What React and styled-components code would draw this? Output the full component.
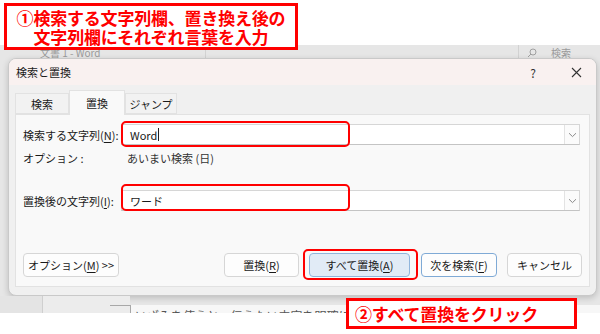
import React from "react";
import styled, { createGlobalStyle } from "styled-components";

const GlobalStyle = createGlobalStyle`
  html, body { margin: 0; padding: 0; background: #ffffff; }
  body { font-family: "Noto Sans CJK JP", "Noto Sans", sans-serif; }
  * { box-sizing: border-box; }
`;

const FONT = `"Noto Sans CJK JP", "Noto Sans", sans-serif`;

const Page = styled.div`
  position: relative;
  width: 600px;
  height: 334px;
  overflow: hidden;
  padding-top: 45px;
  background: #ffffff;
  font-family: ${FONT};
`;

const Backdrop = styled.div`
  height: 268px;
  background: #e6e6e6;
  display: flex;
  flex-direction: column;
  overflow: hidden;
`;

const WordBar = styled.div`
  height: 13px;
  display: flex;
  align-items: flex-end;
  font-size: 10px;
  line-height: 10px;
  color: #9a9a9a;
`;

const WordTitle = styled.span`
  margin-left: 40px;
  width: 165px;
`;

const BarDivider = styled.span`
  width: 1px;
  height: 13px;
  background: #d2d2d2;
  margin-left: ${p => p.$ml || 0}px;
`;

const BarSearch = styled.span`
  margin-left: 8px;
  display: flex;
  align-items: flex-end;
  gap: 14px;
`;

const DialogWrap = styled.div`
  padding: 0 3px 0 8px;
`;

const Dialog = styled.div`
  height: 238px;
  border: 1px solid #c9c9c9;
  border-radius: 8px;
  overflow: hidden;
  display: flex;
  flex-direction: column;
  background: #f0f0f0;
  box-shadow: 0 2px 6px rgba(0, 0, 0, 0.18);
`;

const TitleBar = styled.div`
  height: 26px;
  flex: none;
  background: #f9f1f0;
  display: flex;
  align-items: center;
  padding: 0 0 0 7px;
  font-size: 11px;
  color: #1a1a1a;
`;

const TitleText = styled.span`
  flex: 1;
`;

const TitleBtn = styled.span`
  width: ${p => p.$w}px;
  display: flex;
  justify-content: center;
  align-items: center;
  font-size: 12px;
  color: #333;
`;

const Body = styled.div`
  flex: 1;
  display: flex;
  flex-direction: column;
  padding: 5px 6px 8px 6px;
`;

const TabStrip = styled.div`
  height: 24px;
  flex: none;
  display: flex;
  align-items: flex-end;
  position: relative;
  z-index: 1;
`;

const Tab = styled.div`
  width: ${p => p.$w}px;
  height: ${p => (p.$active ? 25 : 21)}px;
  margin-bottom: ${p => (p.$active ? -1 : 0)}px;
  display: flex;
  align-items: center;
  justify-content: center;
  font-size: 11px;
  color: #1a1a1a;
  background: ${p => (p.$active ? "#f9f9f9" : "#f2f2f2")};
  border: 1px solid #e2e2e2;
  border-bottom: ${p => (p.$active ? "none" : "1px solid #e2e2e2")};
  padding-top: ${p => (p.$active ? 0 : 1)}px;
`;

const Panel = styled.div`
  flex: 1;
  background: #f9f9f9;
  border: 1px solid #e2e2e2;
  display: flex;
  flex-direction: column;
  padding: 9px 9px 9px 7px;
`;

const FieldRow = styled.div`
  display: flex;
  align-items: center;
  height: 21px;
  margin-top: ${p => p.$mt || 0}px;
`;

const Label = styled.div`
  width: 98px;
  flex: none;
  font-size: 11px;
  color: #1a1a1a;
  white-space: nowrap;
`;

const Key = styled.span`
  text-decoration: underline;
  text-underline-offset: 2px;
`;

const Combo = styled.div`
  flex: 1;
  height: 21px;
  background: #ffffff;
  border: 1px solid #d6d6d6;
  border-bottom-color: #c4c4c4;
  display: flex;
  align-items: center;
`;

const ComboText = styled.div`
  flex: 1;
  padding-left: 8px;
  font-size: 11px;
  color: #1a1a1a;
  display: flex;
  align-items: center;
`;

const Caret = styled.span`
  display: inline-block;
  width: 1px;
  height: 13px;
  background: #222;
  margin-left: 1px;
`;

const DropBtn = styled.div`
  width: 15px;
  height: 19px;
  border-left: 1px solid #e3e3e3;
  background: #fbfbfb;
  display: flex;
  align-items: center;
  justify-content: center;
`;

const OptionRow = styled.div`
  display: flex;
  align-items: center;
  height: 14px;
  margin-top: 6px;
  font-size: 11px;
  color: #333;
`;

const OptionValue = styled.span`
  margin-left: 6px;
`;

const Spacer = styled.div`
  flex: 1;
`;

const ButtonRow = styled.div`
  display: flex;
  align-items: center;
  height: 24px;
  margin-right: -2px;
`;

const Button = styled.div`
  width: ${p => p.$w}px;
  height: 24px;
  margin-left: ${p => p.$ml || 0}px;
  display: flex;
  align-items: center;
  justify-content: center;
  font-size: 11px;
  color: #1a1a1a;
  border-radius: 4px;
  background: ${p => (p.$primary ? "#e1ebf6" : "#fdfdfd")};
  border: 1px solid ${p => (p.$primary ? "#90b5dc" : p.$focus ? "#7faad6" : "#d6d6d6")};
  white-space: nowrap;
`;

const DocArea = styled.div`
  flex: 1;
  display: flex;
`;

const DocGutter = styled.div`
  width: 43px;
  border-right: 1px solid #cfcfcf;
  background: #e4e4e4;
`;

const DocMargin = styled.div`
  width: 87px;
  background: #ececec;
  display: flex;
  justify-content: flex-end;
`;

const Crop = styled.div`
  width: 20px;
  height: 9px;
  margin-top: 9px;
  border-top: 1px solid #a8a8a8;
`;

const DocPage = styled.div`
  flex: 1;
  background: #f7f7f7;
  margin-top: 9px;
  display: flex;
`;

const DocText = styled.div`
  width: 216px;
  border-left: 1px solid #a8a8a8;
  font-size: 12px;
  line-height: 12px;
  color: #555;
  padding: 5px 0 0 4px;
  white-space: nowrap;
  overflow: hidden;
`;

const Callout = styled.div`
  position: absolute;
  left: ${p => p.$x}px;
  top: ${p => p.$y}px;
  width: ${p => p.$w}px;
  height: ${p => p.$h}px;
  border: 3px solid #ff0000;
  background: #ffffff;
  color: #ff0000;
  font-weight: 700;
  font-size: 17px;
  line-height: 19px;
  display: flex;
  flex-direction: column;
  align-items: ${p => (p.$left ? "flex-start" : "center")};
  justify-content: center;
  padding-left: ${p => (p.$left ? 6 : 0)}px;
  white-space: nowrap;
  letter-spacing: -0.2px;
`;

const CalloutLine = styled.span`
  display: block;
  height: 19px;
`;

const Highlight = styled.div`
  position: absolute;
  left: ${p => p.$x}px;
  top: ${p => p.$y}px;
  width: ${p => p.$w}px;
  height: ${p => p.$h}px;
  border: 2.5px solid #ff0000;
  border-radius: 5px;
  pointer-events: none;
`;

const Chevron = () => (
  <svg width="9" height="6" viewBox="0 0 9 6">
    <path d="M1 1.2 L4.5 4.6 L8 1.2" fill="none" stroke="#8a8a8a" strokeWidth="1" />
  </svg>
);

const CloseIcon = () => (
  <svg width="11" height="11" viewBox="0 0 11 11">
    <path d="M1 1 L10 10 M10 1 L1 10" stroke="#333" strokeWidth="1.1" fill="none" />
  </svg>
);

const SearchIcon = () => (
  <svg width="10" height="10" viewBox="0 0 10 10">
    <circle cx="6" cy="4" r="3" fill="none" stroke="#a0a0a0" strokeWidth="1" />
    <path d="M4 6 L1 9" stroke="#a0a0a0" strokeWidth="1" />
  </svg>
);

export default function App() {
  return (
    <>
      <GlobalStyle />
      <Page>
        <Backdrop>
          <WordBar>
            <WordTitle>文書 1 - Word</WordTitle>
            <BarDivider />
            <BarDivider $ml={312} />
            <BarSearch>
              <SearchIcon />
              <span>検索</span>
            </BarSearch>
          </WordBar>
          <DialogWrap>
            <Dialog>
              <TitleBar>
                <TitleText>検索と置換</TitleText>
                <TitleBtn $w={46}>?</TitleBtn>
                <TitleBtn $w={40}>
                  <CloseIcon />
                </TitleBtn>
              </TitleBar>
              <Body>
                <TabStrip>
                  <Tab $w={54}>検索</Tab>
                  <Tab $w={56} $active>置換</Tab>
                  <Tab $w={52}>ジャンプ</Tab>
                </TabStrip>
                <Panel>
                  <FieldRow>
                    <Label>
                      検索する文字列(<Key>N</Key>):
                    </Label>
                    <Combo>
                      <ComboText>
                        Word
                        <Caret />
                      </ComboText>
                      <DropBtn>
                        <Chevron />
                      </DropBtn>
                    </Combo>
                  </FieldRow>
                  <OptionRow>
                    <Label>オプション :</Label>
                    <OptionValue>あいまい検索 (日)</OptionValue>
                  </OptionRow>
                  <FieldRow $mt={25}>
                    <Label>
                      置換後の文字列(<Key>I</Key>):
                    </Label>
                    <Combo>
                      <ComboText>ワード</ComboText>
                      <DropBtn>
                        <Chevron />
                      </DropBtn>
                    </Combo>
                  </FieldRow>
                  <Spacer />
                  <ButtonRow>
                    <Button $w={96}>
                      オプション(<Key>M</Key>) &gt;&gt;
                    </Button>
                    <Spacer />
                    <Button $w={75}>
                      置換(<Key>R</Key>)
                    </Button>
                    <Button $w={101} $ml={10} $primary>
                      すべて置換(<Key>A</Key>)
                    </Button>
                    <Button $w={76} $ml={11} $focus>
                      次を検索(<Key>F</Key>)
                    </Button>
                    <Button $w={75} $ml={10}>
                      キャンセル
                    </Button>
                  </ButtonRow>
                </Panel>
              </Body>
            </Dialog>
          </DialogWrap>
          <DocArea>
            <DocGutter />
            <DocMargin>
              <Crop />
            </DocMargin>
            <DocPage>
              <DocText>いざみを使えと、伝えたい内容を明確に表現できます。</DocText>
            </DocPage>
          </DocArea>
        </Backdrop>

        <Highlight $x={121} $y={121} $w={229} $h={26} />
        <Highlight $x={121} $y={184} $w={229} $h={27} />
        <Highlight $x={303} $y={249} $w={115} $h={31} />

        <Callout $x={4} $y={3} $w={294} $h={47}>
          <CalloutLine>①検索する文字列欄、置き換え後の</CalloutLine>
          <CalloutLine>文字列欄にそれぞれ言葉を入力</CalloutLine>
        </Callout>
        <Callout $x={346} $y={298} $w={231} $h={31} $left>
          <CalloutLine>②すべて置換をクリック</CalloutLine>
        </Callout>
      </Page>
    </>
  );
}
